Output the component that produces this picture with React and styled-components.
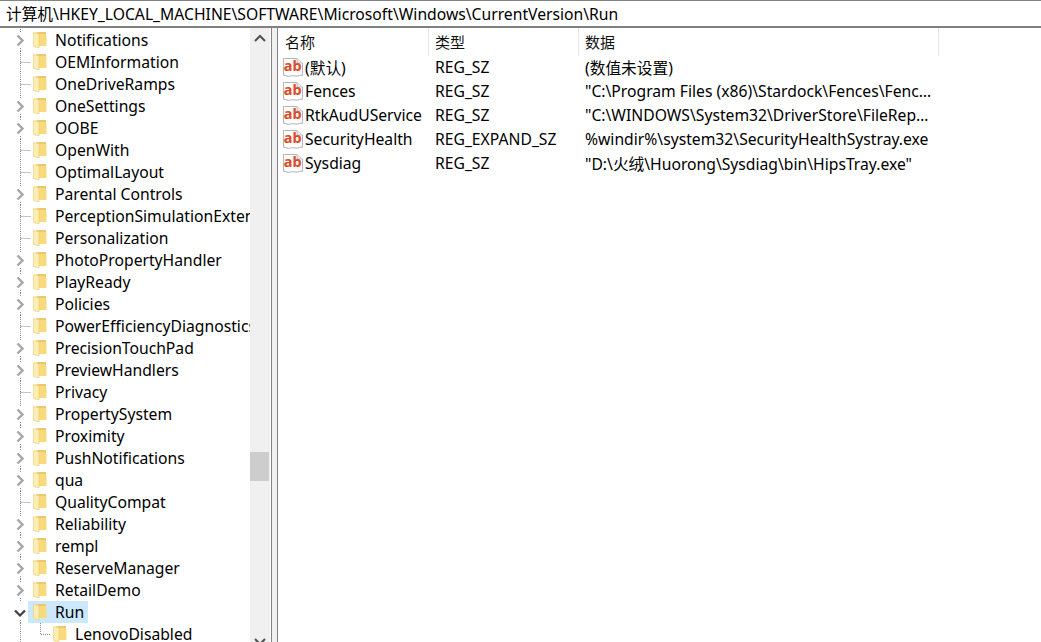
import styled, { createGlobalStyle } from 'styled-components';

const GlobalStyle = createGlobalStyle`
  html, body {
    margin: 0;
    height: 100%;
    overflow: hidden;
    background: #fff;
  }
  body {
    font-family: "Noto Sans", "Noto Sans CJK SC", sans-serif;
    font-size: 15.7px;
    color: #000;
  }
`;

const Window = styled.div`
  width: 1041px;
  height: 642px;
  display: flex;
  flex-direction: column;
  overflow: hidden;
`;

const AddressBar = styled.div`
  height: 24px;
  flex: none;
  border-top: 1px solid #838383;
  border-bottom: 2px solid #808080;
  padding: 1px 0 0 6px;
  line-height: 24px;
  white-space: nowrap;
`;

const Panes = styled.div`
  flex: 1;
  min-height: 0;
  display: flex;
`;

const TreePane = styled.div`
  width: 250px;
  flex: none;
  padding-top: 1px;
  overflow: hidden;
`;

const TreeRow = styled.div`
  height: 22px;
  display: flex;
  align-items: center;
  white-space: nowrap;
  overflow: hidden;
`;

const Gutter = styled.svg`
  width: ${(p) => p.$width}px;
  height: 22px;
  flex: none;
  display: block;
`;

const NameCell = styled.div`
  display: flex;
  align-items: center;
  height: 22px;
  margin-left: ${(p) => (p.$selected ? '-5px' : '0')};
  padding: ${(p) => (p.$selected ? '0 4px 0 5px' : '0')};
  background: ${(p) => (p.$selected ? '#cce8ff' : 'transparent')};
`;

const FolderSvg = styled.svg`
  width: 14px;
  height: 18px;
  flex: none;
  display: block;
`;

const TreeLabel = styled.span`
  margin-left: 8px;
  line-height: 22px;
`;

const Scrollbar = styled.div`
  width: 20px;
  flex: none;
  background: #f0f0f0;
  display: flex;
  flex-direction: column;
  overflow: hidden;
`;

const ScrollArrow = styled.svg`
  width: 20px;
  height: 20px;
  flex: none;
  display: block;
`;

const ScrollTrack = styled.div`
  height: 583px;
  flex: none;
  padding-top: 404px;
  box-sizing: border-box;
`;

const ScrollThumb = styled.div`
  width: 19px;
  height: 29px;
  background: #cdcdcd;
`;

const Splitter = styled.div`
  width: 8px;
  flex: none;
  box-sizing: border-box;
  background: #f0f0f0;
  border-left: 1px solid #fff;
  border-right: 1px solid #82828f;
  &::before {
    content: "";
    display: block;
    width: 1px;
    height: 100%;
    background: #82828f;
  }
`;

const ListPane = styled.div`
  flex: 1;
  min-width: 0;
  display: flex;
  flex-direction: column;
`;

const HeaderRow = styled.div`
  display: grid;
  grid-template-columns: 151px 150px 360px;
  height: 26px;
  flex: none;
  margin-bottom: 1px;
`;

const HeaderCell = styled.div`
  border-right: 1px solid #e5e5e5;
  padding-left: ${(p) => (p.$first ? '7px' : '6px')};
  font-size: 15px;
  line-height: 28px;
  color: #111;
`;

const ListRow = styled.div`
  display: grid;
  grid-template-columns: 150px 150px 355px;
  height: 24px;
  align-items: center;
  white-space: nowrap;
`;

const ValueName = styled.div`
  display: flex;
  align-items: center;
  padding-left: 5px;
  gap: 2px;
`;

const TypeCell = styled.div`
  padding-left: 7px;
`;

const DataCell = styled.div`
  padding-left: 7px;
  overflow: hidden;
  text-overflow: ellipsis;
`;

const keys = [
  ['Notifications', true],
  ['OEMInformation', false],
  ['OneDriveRamps', false],
  ['OneSettings', true],
  ['OOBE', true],
  ['OpenWith', false],
  ['OptimalLayout', false],
  ['Parental Controls', true],
  ['PerceptionSimulationExtensions', false],
  ['Personalization', false],
  ['PhotoPropertyHandler', true],
  ['PlayReady', true],
  ['Policies', true],
  ['PowerEfficiencyDiagnostics', false],
  ['PrecisionTouchPad', true],
  ['PreviewHandlers', true],
  ['Privacy', false],
  ['PropertySystem', true],
  ['Proximity', true],
  ['PushNotifications', true],
  ['qua', true],
  ['QualityCompat', false],
  ['Reliability', true],
  ['rempl', true],
  ['ReserveManager', true],
  ['RetailDemo', true],
];

const values = [
  ['(默认)', 'REG_SZ', '(数值未设置)'],
  ['Fences', 'REG_SZ', '"C:\\Program Files (x86)\\Stardock\\Fences\\Fences.exe" /startup'],
  ['RtkAudUService', 'REG_SZ', '"C:\\WINDOWS\\System32\\DriverStore\\FileRepository\\realtek.inf\\RtkAudUService64.exe"'],
  ['SecurityHealth', 'REG_EXPAND_SZ', '%windir%\\system32\\SecurityHealthSystray.exe'],
  ['Sysdiag', 'REG_SZ', '"D:\\火绒\\Huorong\\Sysdiag\\bin\\HipsTray.exe"'],
];

const dots = { stroke: '#8a8a8a', strokeWidth: 1, strokeDasharray: '1 1', fill: 'none' };

function Connector({ kind }) {
  // kind: closed, leaf, open, child
  const width = kind === 'child' ? 53 : 33;
  return (
    <Gutter viewBox={`0 0 ${width} 22`} $width={width}>
      {kind === 'child' && (
        <g {...dots}>
          <path d="M20.5 0V22" />
          <path d="M40.5 0V11.5H50" />
        </g>
      )}
      {kind === 'leaf' && (
        <g {...dots}>
          <path d="M20.5 0V22" />
          <path d="M20.5 11.5H31" />
        </g>
      )}
      {kind === 'closed' && (
        <>
          <path {...dots} d="M20.5 0V3M20.5 19V22" />
          <path d="M17.5 6.5L22.5 11.5L17.5 16.5" fill="none" stroke="#a6a6a6" strokeWidth="2.4" />
        </>
      )}
      {kind === 'open' && (
        <>
          <path {...dots} d="M20.5 19V22" />
          <path d="M15 9.5L20 14.5L25 9.5" fill="none" stroke="#404040" strokeWidth="2.2" />
        </>
      )}
    </Gutter>
  );
}

function Folder() {
  return (
    <FolderSvg viewBox="0 0 14 18">
      <path d="M3 1H13V15H3Z" fill="#f3d987" />
      <path d="M5 1H13V3H5Z" fill="#ecc868" />
      <path d="M6 4H13.5V15H6Z" fill="#f8da7c" />
      <path d="M0.5 1.5L6 3V17L0.5 15.5Z" fill="#fdeeb5" />
      <path d="M0.5 1.5L6 3V17L0.5 15.5Z" fill="none" stroke="#eccb70" strokeWidth="0.6" />
    </FolderSvg>
  );
}

function StringIcon() {
  return (
    <svg width="20" height="21" viewBox="0 0 20 21" style={{ flex: 'none', display: 'block' }}>
      <path d="M0.5 1.5H14L19.5 6V18.5C17 17 15 20 12 19C9 18 6 20 4 19C2.5 18.5 1.5 18 0.5 18.5Z" fill="#fdfdfd" stroke="#b4b4b4" />
      <path d="M14 1.5V6H19.5" fill="#ececec" stroke="#c4c4c4" />
      <text x="0.8" y="14" fontFamily="Noto Sans, sans-serif" fontWeight="700" fontSize="14.5" fill="#dc4a28">ab</text>
    </svg>
  );
}

export default function App() {
  return (
    <Window>
      <GlobalStyle />
      <AddressBar>计算机\HKEY_LOCAL_MACHINE\SOFTWARE\Microsoft\Windows\CurrentVersion\Run</AddressBar>
      <Panes>
        <TreePane>
          {keys.map(([name, hasChildren]) => (
            <TreeRow key={name}>
              <Connector kind={hasChildren ? 'closed' : 'leaf'} />
              <NameCell>
                <Folder />
                <TreeLabel>{name}</TreeLabel>
              </NameCell>
            </TreeRow>
          ))}
          <TreeRow>
            <Connector kind="open" />
            <NameCell $selected>
              <Folder />
              <TreeLabel>Run</TreeLabel>
            </NameCell>
          </TreeRow>
          <TreeRow>
            <Connector kind="child" />
            <NameCell>
              <Folder />
              <TreeLabel>LenovoDisabled</TreeLabel>
            </NameCell>
          </TreeRow>
        </TreePane>
        <Scrollbar>
          <ScrollArrow viewBox="0 0 20 20">
            <path d="M5 13L10 8L15 13" fill="none" stroke="#505050" strokeWidth="2" />
          </ScrollArrow>
          <ScrollTrack>
            <ScrollThumb />
          </ScrollTrack>
          <ScrollArrow viewBox="0 0 20 20">
            <path d="M5 8L10 13L15 8" fill="none" stroke="#505050" strokeWidth="2" />
          </ScrollArrow>
        </Scrollbar>
        <Splitter />
        <ListPane>
          <HeaderRow>
            <HeaderCell $first>名称</HeaderCell>
            <HeaderCell>类型</HeaderCell>
            <HeaderCell>数据</HeaderCell>
          </HeaderRow>
          {values.map(([name, type, data]) => (
            <ListRow key={name}>
              <ValueName>
                <StringIcon />
                {name}
              </ValueName>
              <TypeCell>{type}</TypeCell>
              <DataCell>{data}</DataCell>
            </ListRow>
          ))}
        </ListPane>
      </Panes>
    </Window>
  );
}
